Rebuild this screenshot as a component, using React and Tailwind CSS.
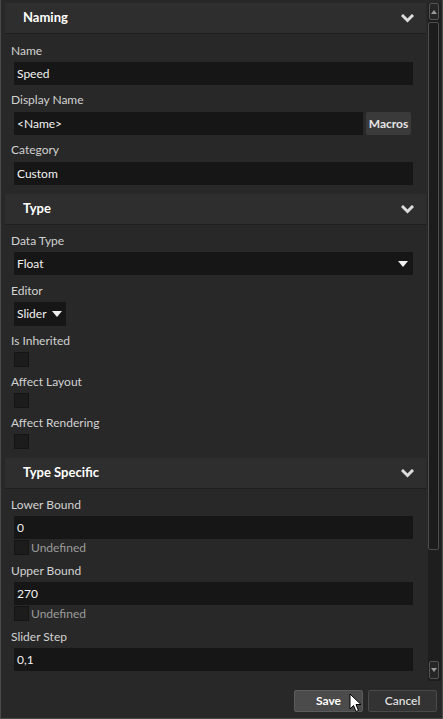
import React from 'react';

const font = { fontFamily: 'Lato, "Noto Sans", sans-serif' };

function Chevron() {
  return (
    <svg width="13" height="9" viewBox="0 0 13 9" className="shrink-0">
      <polyline points="2,2 6.5,6.5 11,2" fill="none" stroke="#dcdcdc" strokeWidth="3" strokeLinecap="square" />
    </svg>
  );
}

function Triangle({ className = '' }) {
  return (
    <svg width="10" height="6" viewBox="0 0 10 6" className={className}>
      <polygon points="0,0 10,0 5,6" fill="#f0f0f0" />
    </svg>
  );
}

function Header({ title, className = '' }) {
  return (
    <div className={`h-[31px] bg-[#2e2e2e] border-b border-[#1f1f1f] flex items-center justify-between pl-[18px] pr-[12px] ${className}`}>
      <span className="text-[13px] font-bold text-white">{title}</span>
      <Chevron />
    </div>
  );
}

function Label({ children, className = '' }) {
  return <div className={`h-[16px] leading-[16px] pl-[6px] text-[12px] text-[#d2d2d2] ${className}`}>{children}</div>;
}

function Field({ value, className = '' }) {
  return (
    <div className={`ml-[9px] w-[399px] h-[23px] bg-[#161616] flex items-center pl-[3px] text-[12px] text-[#f2f2f2] ${className}`}>
      {value}
    </div>
  );
}

function Check({ className = '' }) {
  return <div className={`w-[15px] h-[15px] bg-[#1c1c1c] border border-[#141414] ${className}`} />;
}

function Undefined() {
  return (
    <div className="ml-[9px] mt-[1px] flex items-center gap-[2px]">
      <Check />
      <span className="text-[12px] text-[#9c9c9c] leading-[15px]">Undefined</span>
    </div>
  );
}

function Scrollbar() {
  return (
    <div className="w-[13px] ml-[2px] bg-[#1e1e1e] flex flex-col items-start">
      <div className="ml-[1px] w-[10px] h-[17px] border border-[#555] rounded-[2px] bg-[#262626] flex items-center justify-center">
        <svg width="6" height="4" viewBox="0 0 6 4"><polygon points="0,4 6,4 3,0" fill="#9a9a9a" /></svg>
      </div>
      <div className="mt-[2px] w-[11px] h-[528px] border border-[#4d4d4d] rounded-[2px] bg-[#1c1c1c]" />
      <div className="flex-1" />
      <div className="ml-[1px] mb-[2px] w-[10px] h-[18px] border border-[#555] rounded-[2px] bg-[#262626] flex items-center justify-center">
        <svg width="6" height="4" viewBox="0 0 6 4"><polygon points="0,0 6,0 3,4" fill="#9a9a9a" /></svg>
      </div>
    </div>
  );
}

export default function App() {
  return (
    <div style={font} className="w-[443px] h-[719px] bg-[#282828] border-x border-b border-[#4a4a4a] flex flex-col overflow-hidden">
      <div className="flex h-[681px] pt-[3px]">
        <div className="w-[421px] ml-[4px] overflow-hidden">
          <Header title="Naming" />
          <Label className="mt-[9px]">Name</Label>
          <Field value="Speed" className="mt-[3px]" />
          <Label className="mt-[7px]">Display Name</Label>
          <div className="ml-[9px] mt-[4px] flex gap-[3px]">
            <div className="w-[349px] h-[23px] bg-[#161616] flex items-center pl-[3px] text-[12px] text-[#f2f2f2]">&lt;Name&gt;</div>
            <div className="w-[45px] h-[23px] bg-[#3a3a3a] rounded-[2px] flex items-center justify-center text-[12px] font-bold text-[#e4e4e4]">Macros</div>
          </div>
          <Label className="mt-[7px]">Category</Label>
          <Field value="Custom" className="mt-[4px]" />

          <Header title="Type" className="mt-[9px]" />
          <Label className="mt-[8px]">Data Type</Label>
          <div className="ml-[9px] mt-[3px] w-[399px] h-[23px] bg-[#161616] flex items-center justify-between pl-[3px] pr-[5px] text-[12px] text-[#f2f2f2]">
            <span>Float</span>
            <Triangle />
          </div>
          <Label className="mt-[8px]">Editor</Label>
          <div className="ml-[9px] mt-[3px] w-[52px] h-[24px] bg-[#161616] flex items-center gap-[5px] pl-[3px] text-[12px] text-[#f2f2f2]">
            <span>Slider</span>
            <Triangle />
          </div>
          <Label className="mt-[7px]">Is Inherited</Label>
          <Check className="ml-[9px] mt-[3px]" />
          <Label className="mt-[7px]">Affect Layout</Label>
          <Check className="ml-[9px] mt-[3px]" />
          <Label className="mt-[7px]">Affect Rendering</Label>
          <Check className="ml-[9px] mt-[3px]" />

          <Header title="Type Specific" className="mt-[9px]" />
          <Label className="mt-[8px]">Lower Bound</Label>
          <Field value="0" className="mt-[3px]" />
          <Undefined />
          <Label className="mt-[8px]">Upper Bound</Label>
          <Field value="270" className="mt-[3px]" />
          <Undefined />
          <Label className="mt-[8px]">Slider Step</Label>
          <Field value="0,1" className="mt-[3px]" />
        </div>
        <Scrollbar />
      </div>

      <div className="relative flex justify-end gap-[5px] pr-[5px] pt-[9px]">
        <button className="w-[69px] h-[22px] bg-[#4b4b4b] border border-[#5c5c5c] rounded-[2px] text-[12px] font-bold text-white">Save</button>
        <button className="w-[69px] h-[22px] bg-[#333333] border border-[#4a4a4a] rounded-[2px] text-[12px] font-semibold text-[#dedede]">Cancel</button>
        <svg width="14" height="20" viewBox="0 0 14 20" className="absolute left-[348px] top-[12px]">
          <path d="M1 1 L1 16 L4.5 12.5 L7 18.5 L9.5 17.5 L7 11.5 L12 11.5 Z" fill="#ffffff" stroke="#000000" strokeWidth="1" strokeLinejoin="round" />
        </svg>
      </div>
    </div>
  );
}
